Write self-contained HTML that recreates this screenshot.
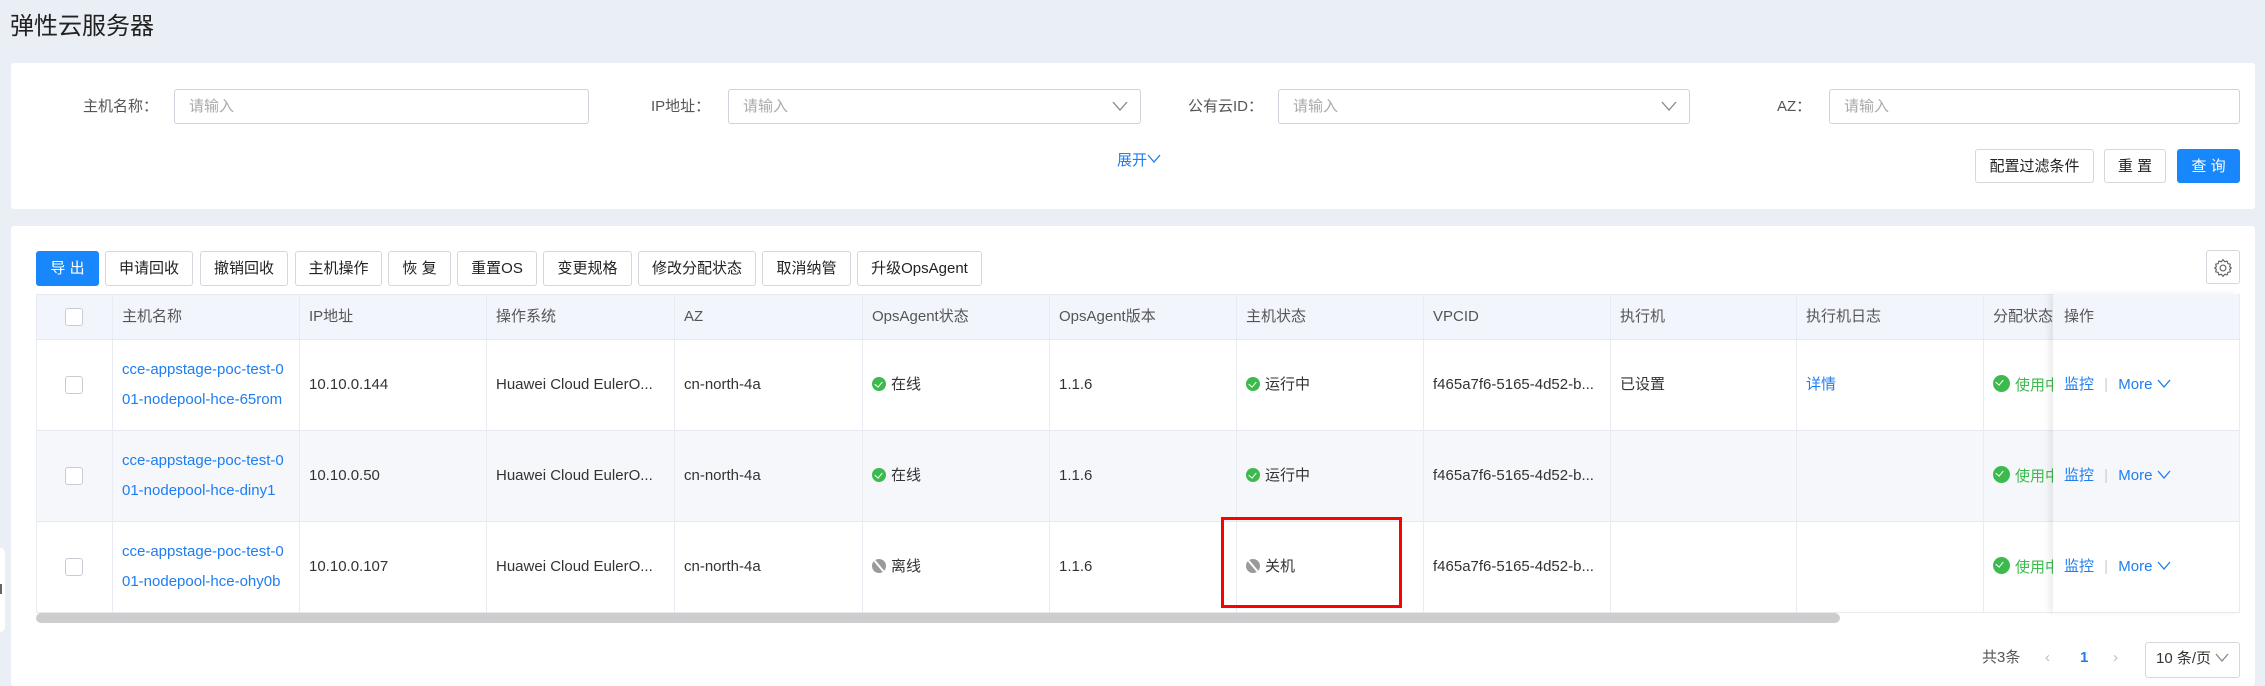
<!DOCTYPE html>
<html><head><meta charset="utf-8"><style>
*{box-sizing:border-box;margin:0;padding:0}
body{width:2265px;height:673px;overflow:hidden;background:#eaeef5;font-family:"Liberation Sans","Noto Sans CJK SC",sans-serif;color:#333;position:relative;font-size:15px}
.a{position:absolute}
.card{background:#fff;border-radius:3px}
.lbl{color:#555;font-size:15px;line-height:35px;height:35px}
.inp{border:1px solid #cfd3dc;border-radius:3px;height:35px;color:#aaa;font-size:15px;line-height:33px;padding-left:14px}
.chev{position:absolute;right:12px;top:10px;width:16px;height:12px}
.btn{border:1px solid #d4d7de;border-radius:3px;background:#fff;color:#222;font-size:15px;text-align:center;height:35px;line-height:33px}
.blue{background:#1787fb;border-color:#1787fb;color:#fff}
.th{background:#f2f6fc;height:45px;top:294px;line-height:45px;color:#555;font-size:15px}
.vl{position:absolute;width:1px;background:#e8ecf2;top:294px;height:318px}
.hl{position:absolute;height:1px;background:#e6eaf0;left:36px;width:2204px}
.cell{position:absolute;font-size:15px;line-height:20px;white-space:nowrap}
.lnk{color:#1e7df0}
.cb{position:absolute;width:18px;height:18px;border:1px solid #c8ccd4;border-radius:3px;background:#fff;left:65px}
.ok{display:inline-block;width:14px;height:14px;border-radius:50%;background:#3dba4e;vertical-align:-2px;margin-right:5px;position:relative}
.ok:after{content:"";position:absolute;left:4px;top:3px;width:4px;height:6px;border:solid #fff;border-width:0 1.5px 1.5px 0;transform:rotate(40deg)}
.off{display:inline-block;width:14px;height:14px;border-radius:50%;background:#9a9a9a;vertical-align:-2px;margin-right:5px;position:relative;overflow:hidden}
.off:after{content:"";position:absolute;left:6px;top:-1px;width:2px;height:16px;background:#fff;transform:rotate(-40deg)}
</style></head><body>
<div class="a" style="left:0;top:548px;width:5px;height:84px;background:#fff;border-radius:0 6px 6px 0"></div>
<div class="a" style="left:0;top:584px;width:2px;height:10px;background:#666"></div>
<div class="a" style="left:10px;top:12px;font-size:24px;color:#222;line-height:30px">弹性云服务器</div>

<div class="a card" style="left:11px;top:63px;width:2244px;height:146px"></div>
<div class="a lbl" style="left:83px;top:89px">主机名称：</div>
<div class="a inp" style="left:174px;top:89px;width:415px">请输入</div>
<div class="a lbl" style="left:651px;top:89px">IP地址：</div>
<div class="a inp" style="left:728px;top:89px;width:413px">请输入<svg class="chev" viewBox="0 0 16 12"><path d="M1 2l7 8 7-8" fill="none" stroke="#888" stroke-width="1.3"/></svg></div>
<div class="a lbl" style="left:1188px;top:89px">公有云ID：</div>
<div class="a inp" style="left:1278px;top:89px;width:412px">请输入<svg class="chev" viewBox="0 0 16 12"><path d="M1 2l7 8 7-8" fill="none" stroke="#888" stroke-width="1.3"/></svg></div>
<div class="a lbl" style="left:1777px;top:89px">AZ：</div>
<div class="a inp" style="left:1829px;top:89px;width:411px">请输入</div>
<div class="a" style="left:1117px;top:151px;color:#1e7df0;font-size:15px;line-height:20px">展开<svg width="14" height="10" viewBox="0 0 14 10" style="vertical-align:1px"><path d="M1 1l6 7 6-7" fill="none" stroke="#1e7df0" stroke-width="1.3"/></svg></div>
<div class="a btn" style="left:1975px;top:149px;width:119px;height:34px">配置过滤条件</div>
<div class="a btn" style="left:2104px;top:149px;width:62px;height:34px">重 置</div>
<div class="a btn blue" style="left:2177px;top:149px;width:63px;height:34px">查 询</div>

<div class="a card" style="left:11px;top:226px;width:2244px;height:460px"></div>
<div class="a btn blue" style="left:36px;top:251px;width:63px">导 出</div>
<div class="a btn" style="left:105px;top:251px;width:88px">申请回收</div>
<div class="a btn" style="left:200px;top:251px;width:88px">撤销回收</div>
<div class="a btn" style="left:295px;top:251px;width:87px">主机操作</div>
<div class="a btn" style="left:388px;top:251px;width:63px">恢 复</div>
<div class="a btn" style="left:457px;top:251px;width:80px">重置OS</div>
<div class="a btn" style="left:543px;top:251px;width:89px">变更规格</div>
<div class="a btn" style="left:638px;top:251px;width:118px">修改分配状态</div>
<div class="a btn" style="left:762px;top:251px;width:89px">取消纳管</div>
<div class="a btn" style="left:857px;top:251px;width:125px">升级OpsAgent</div>
<div class="a btn" style="left:2206px;top:250px;width:34px;height:34px;padding-top:7px;line-height:0"><svg width="20" height="20" viewBox="0 0 24 24"><path d="M12 2l2 2.5 3-.8.8 3 3 .8-.8 3L22 12l-2 1.5.8 3-3 .8-.8 3-3-.8L12 22l-2-2.5-3 .8-.8-3-3-.8.8-3L2 12l2-1.5-.8-3 3-.8.8-3 3 .8z" fill="none" stroke="#666" stroke-width="1.4" stroke-linejoin="round"/><circle cx="12" cy="12" r="3.5" fill="none" stroke="#666" stroke-width="1.4"/></svg></div>

<div class="a th" style="left:36px;width:2204px"></div>
<div class="a" style="left:36px;top:430px;width:2204px;height:91px;background:#f5f7fa"></div>
<div class="hl" style="top:294px"></div><div class="hl" style="top:339px"></div><div class="hl" style="top:430px"></div><div class="hl" style="top:521px"></div><div class="hl" style="top:612px"></div>
<div class="vl" style="left:36px"></div><div class="vl" style="left:112px"></div><div class="vl" style="left:299px"></div><div class="vl" style="left:486px"></div><div class="vl" style="left:674px"></div><div class="vl" style="left:862px"></div><div class="vl" style="left:1049px"></div><div class="vl" style="left:1236px"></div><div class="vl" style="left:1423px"></div><div class="vl" style="left:1610px"></div><div class="vl" style="left:1796px"></div><div class="vl" style="left:1983px"></div><div class="vl" style="left:2239px"></div>

<div class="cb" style="top:308px"></div>
<div class="cell" style="left:122px;top:307px;color:#555">主机名称</div>
<div class="cell" style="left:309px;top:307px;color:#555">IP地址</div>
<div class="cell" style="left:496px;top:307px;color:#555">操作系统</div>
<div class="cell" style="left:684px;top:307px;color:#555">AZ</div>
<div class="cell" style="left:872px;top:307px;color:#555">OpsAgent状态</div>
<div class="cell" style="left:1059px;top:307px;color:#555">OpsAgent版本</div>
<div class="cell" style="left:1246px;top:307px;color:#555">主机状态</div>
<div class="cell" style="left:1433px;top:307px;color:#555">VPCID</div>
<div class="cell" style="left:1620px;top:307px;color:#555">执行机</div>
<div class="cell" style="left:1806px;top:307px;color:#555">执行机日志</div>
<div class="cell" style="left:1993px;top:307px;color:#555">分配状态</div>

<div class="cb" style="top:376px"></div>
<div class="cell lnk" style="left:122px;top:355px;line-height:30px">cce-appstage-poc-test-0<br>01-nodepool-hce-65rom</div>
<div class="cell" style="left:309px;top:375px">10.10.0.144</div>
<div class="cell" style="left:496px;top:375px">Huawei Cloud EulerO...</div>
<div class="cell" style="left:684px;top:375px">cn-north-4a</div>
<div class="cell" style="left:872px;top:375px"><span class="ok"></span>在线</div>
<div class="cell" style="left:1059px;top:375px">1.1.6</div>
<div class="cell" style="left:1246px;top:375px"><span class="ok"></span>运行中</div>
<div class="cell" style="left:1433px;top:375px">f465a7f6-5165-4d52-b...</div>
<div class="cell" style="left:1620px;top:375px">已设置</div>
<div class="cell lnk" style="left:1806px;top:375px">详情</div>
<div class="cell" style="left:1993px;top:375px;color:#3dba4e"><span class="ok" style="width:17px;height:17px"></span>使用中</div>

<div class="cb" style="top:467px"></div>
<div class="cell lnk" style="left:122px;top:446px;line-height:30px">cce-appstage-poc-test-0<br>01-nodepool-hce-diny1</div>
<div class="cell" style="left:309px;top:466px">10.10.0.50</div>
<div class="cell" style="left:496px;top:466px">Huawei Cloud EulerO...</div>
<div class="cell" style="left:684px;top:466px">cn-north-4a</div>
<div class="cell" style="left:872px;top:466px"><span class="ok"></span>在线</div>
<div class="cell" style="left:1059px;top:466px">1.1.6</div>
<div class="cell" style="left:1246px;top:466px"><span class="ok"></span>运行中</div>
<div class="cell" style="left:1433px;top:466px">f465a7f6-5165-4d52-b...</div>
<div class="cell" style="left:1993px;top:466px;color:#3dba4e"><span class="ok" style="width:17px;height:17px"></span>使用中</div>

<div class="cb" style="top:558px"></div>
<div class="cell lnk" style="left:122px;top:537px;line-height:30px">cce-appstage-poc-test-0<br>01-nodepool-hce-ohy0b</div>
<div class="cell" style="left:309px;top:557px">10.10.0.107</div>
<div class="cell" style="left:496px;top:557px">Huawei Cloud EulerO...</div>
<div class="cell" style="left:684px;top:557px">cn-north-4a</div>
<div class="cell" style="left:872px;top:557px"><span class="off"></span>离线</div>
<div class="cell" style="left:1059px;top:557px">1.1.6</div>
<div class="cell" style="left:1246px;top:557px"><span class="off"></span>关机</div>
<div class="cell" style="left:1433px;top:557px">f465a7f6-5165-4d52-b...</div>
<div class="cell" style="left:1993px;top:557px;color:#3dba4e"><span class="ok" style="width:17px;height:17px"></span>使用中</div>

<div class="a" style="left:2053px;top:294px;width:187px;height:318px;background:#fff;box-shadow:-4px 0 6px rgba(0,0,0,0.08)"></div>
<div class="a" style="left:2053px;top:294px;width:187px;height:45px;background:#f2f6fc"></div>
<div class="a" style="left:2053px;top:430px;width:187px;height:91px;background:#f5f7fa"></div>
<div class="hl" style="left:2053px;width:187px;top:339px"></div><div class="hl" style="left:2053px;width:187px;top:430px"></div><div class="hl" style="left:2053px;width:187px;top:521px"></div><div class="hl" style="left:2053px;width:187px;top:612px"></div>
<div class="vl" style="left:2239px"></div>
<div class="cell" style="left:2064px;top:307px;color:#555">操作</div>
<div class="cell lnk" style="left:2064px;top:375px">监控 <span style="color:#ccc;margin:0 6px">|</span> More <svg width="14" height="10" viewBox="0 0 14 10"><path d="M1 1l6 7 6-7" fill="none" stroke="#1e7df0" stroke-width="1.3"/></svg></div>
<div class="cell lnk" style="left:2064px;top:466px">监控 <span style="color:#ccc;margin:0 6px">|</span> More <svg width="14" height="10" viewBox="0 0 14 10"><path d="M1 1l6 7 6-7" fill="none" stroke="#1e7df0" stroke-width="1.3"/></svg></div>
<div class="cell lnk" style="left:2064px;top:557px">监控 <span style="color:#ccc;margin:0 6px">|</span> More <svg width="14" height="10" viewBox="0 0 14 10"><path d="M1 1l6 7 6-7" fill="none" stroke="#1e7df0" stroke-width="1.3"/></svg></div>

<div class="a" style="left:1221px;top:517px;width:181px;height:91px;border:3px solid #f00"></div>
<div class="a" style="left:36px;top:613px;width:1804px;height:10px;background:#cdcdcd;border-radius:5px"></div>

<div class="cell" style="left:1982px;top:648px;color:#555">共3条</div>
<div class="cell" style="left:2045px;top:648px;color:#bbb">‹</div>
<div class="cell" style="left:2080px;top:648px;color:#1e7df0;font-weight:bold">1</div>
<div class="cell" style="left:2113px;top:648px;color:#bbb">›</div>
<div class="a" style="left:2145px;top:642px;width:95px;height:36px;border:1px solid #d4d7de;border-radius:3px;font-size:15px;line-height:32px;padding-left:10px">10 条/页 <svg width="14" height="10" viewBox="0 0 14 10"><path d="M1 1l6 7 6-7" fill="none" stroke="#888" stroke-width="1.3"/></svg></div>
</body></html>
